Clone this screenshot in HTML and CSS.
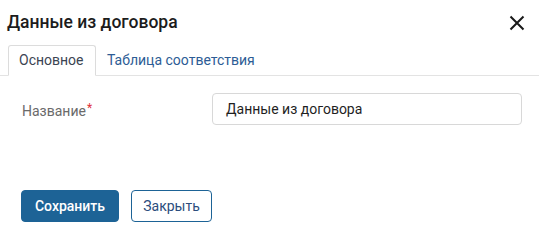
FILE: index.html
```html
<!DOCTYPE html>
<html lang="ru">
<head>
<meta charset="utf-8">
<link rel="stylesheet" href="styles.css">
</head>
<body>
<div class="dialog">
  <div class="header">
    <h1 class="title">Данные из договора</h1>
    <button class="close-x" aria-label="Закрыть">
      <svg width="16" height="16" viewBox="0 0 16 16"><path d="M1.5 1.5 L14.5 14.5 M14.5 1.5 L1.5 14.5" stroke="#1a1a1a" stroke-width="2" fill="none"/></svg>
    </button>
  </div>
  <div class="tabs">
    <div class="tab active">Основное</div>
    <div class="tab">Таблица соответствия</div>
  </div>
  <div class="body">
    <div class="row">
      <label class="label">Название<span class="req">*</span></label>
      <div class="field">Данные из договора</div>
    </div>
  </div>
  <div class="footer">
    <button class="btn primary">Сохранить</button>
    <button class="btn secondary">Закрыть</button>
  </div>
</div>
</body>
</html>
```
FILE: styles.css
```css
* { box-sizing: border-box; }
html, body { margin: 0; padding: 0; background: #fff; }
body { font-family: Roboto, "Noto Sans", sans-serif; color: #222; }
.dialog { width: 539px; height: 224px; overflow: hidden; }
.header { display: flex; justify-content: space-between; padding: 10px 7px 0 7px; height: 45px; align-items: flex-start; }
.title { margin: 0; font-size: 17.5px; line-height: 24px; font-weight: 500; color: #1c1c1c; }
.close-x { border: 0; background: none; padding: 0; margin: 5px 7px 0 0; width: 16px; height: 16px; display: flex; }
.tabs { display: flex; padding-left: 8px; border-bottom: 1px solid #e3e3e3; height: 31px; }
.tab { font-size: 14px; line-height: 20px; padding: 5px 10px 6px 11px; color: #2d5c95; }
.tab.active { border: 1px solid #dcdcdc; border-bottom: 1px solid #fff; border-radius: 3px 3px 0 0; color: #3b4452; height: 31px; width: 88px; padding-left: 10px; padding-top: 4px; }
.body { padding: 17px 17px 0 22px; }
.row { display: flex; align-items: center; height: 32px; }
.label { width: 190px; font-size: 14px; color: #6a6a6a; line-height: 20px; padding-top: 1px; }
.req { color: #e0303a; font-size: 12px; vertical-align: 4px; margin-left: 1px; }
.field { flex: 1; height: 32px; border: 1px solid #d8d8d8; border-radius: 4px; padding: 0 13px; font-size: 14px; line-height: 30px; color: #1f1f1f; }
.footer { display: flex; gap: 12px; padding: 65px 0 0 21px; }
.btn { height: 32px; border-radius: 4px; font-family: Roboto, "Noto Sans", sans-serif; font-size: 14px; padding: 0; }
.btn.primary { width: 98px; background: #1d6396; border: 1px solid #1d6396; color: #fff; font-weight: 500; }
.btn.secondary { width: 81px; background: #fff; border: 1px solid #1d6396; color: #2c4d7d; }
```
